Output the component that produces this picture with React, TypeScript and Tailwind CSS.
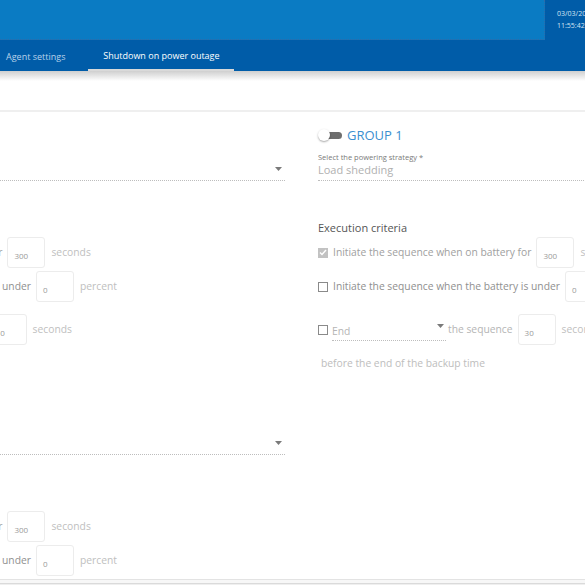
import React from "react";

const FONT = "font-['Open_Sans','Liberation_Sans',sans-serif]";

function Toggle() {
  return (
    <div className="relative w-[24px] h-[12px] flex items-center">
      <div className="ml-[6px] w-[18px] h-[7px] rounded-full bg-[#6e6e6e] bg-[radial-gradient(#9a9a9a_0.6px,transparent_0.7px)] bg-[length:2px_2px]" />
      <div className="absolute left-0 top-0 w-[12px] h-[12px] rounded-full bg-white shadow-[0_1px_2px_rgba(0,0,0,0.35)]" />
    </div>
  );
}

function Caret() {
  return (
    <svg width="7" height="4" viewBox="0 0 7 4" className="block">
      <polygon points="0,0 7,0 3.5,4" fill="#7a7a7a" />
    </svg>
  );
}

function Check({ checked }: { checked?: boolean }) {
  if (checked) {
    return (
      <div className="w-[10px] h-[10px] bg-[#c2c2c2] flex items-center justify-center shrink-0">
        <svg width="8" height="7" viewBox="0 0 8 7">
          <path d="M1 3.6 L3 5.5 L7 1" fill="none" stroke="#fff" strokeWidth="1.4" />
        </svg>
      </div>
    );
  }
  return <div className="w-[10px] h-[10px] border border-[#8a8a8a] bg-white shrink-0" />;
}

function NumBox({ value }: { value: string }) {
  return (
    <div className="w-[38px] h-[31px] border border-[#ececec] rounded-[3px] flex items-end pl-[6px] pb-[6px] text-[8px] leading-[10px] text-[#9a9a9a] shrink-0">
      {value}
    </div>
  );
}

function Group({ name, strategy }: { name: string; strategy: string }) {
  return (
    <div className="h-[274px] pt-[15px]">
      <div className="h-[16px] flex items-center gap-[5px]">
        <Toggle />
        <span className="text-[13px] leading-[16px] text-[#3b8fd0]">{name}</span>
      </div>
      <div className="mt-[9px] border-b border-dotted border-[#bdbdbd] pb-[2px] relative">
        <div className="text-[7.5px] leading-[10px] text-[#7a7a7a]">Select the powering strategy *</div>
        <div className="text-[11px] leading-[16px] text-[#b0b0b0]">{strategy}</div>
        <div className="absolute right-[3px] top-[15px]">
          <Caret />
        </div>
      </div>
      <div className="mt-[39px] text-[11px] leading-[16px] text-[#555]">Execution criteria</div>
      <div className="mt-[1px] h-[31px] flex items-center text-[10.3px] text-[#9a9a9a]">
        <Check checked />
        <span className="ml-[5px] mr-[5px] text-[#a0a0a0]">Initiate the sequence when on battery for</span>
        <NumBox value="300" />
        <span className="ml-[6px] text-[#c0c0c0]">seconds</span>
      </div>
      <div className="mt-[3px] h-[31px] flex items-center text-[10.3px]">
        <Check />
        <span className="ml-[5px] mr-[5px] text-[#8f8f8f]">Initiate the sequence when the battery is under</span>
        <NumBox value="0" />
        <span className="ml-[6px] text-[#c0c0c0]">percent</span>
      </div>
      <div className="mt-[12px] h-[31px] flex items-center text-[10.3px] text-[#b5b5b5]">
        <Check />
        <div className="ml-[4px] w-[114px] h-[31px] relative">
          <div className="absolute left-0 right-0 top-[8px] h-[19px] border-b border-dotted border-[#bdbdbd] leading-[18px]">End</div>
          <div className="absolute right-[2px] top-[10px]">
            <Caret />
          </div>
        </div>
        <span className="ml-[2px] mr-[5px]">the sequence</span>
        <NumBox value="30" />
        <span className="ml-[6px] text-[#c0c0c0]">seconds</span>
      </div>
      <div className="mt-[10px] ml-[3px] text-[10.3px] leading-[16px] text-[#bdbdbd]">before the end of the backup time</div>
    </div>
  );
}

export default function App() {
  return (
    <div className={`w-[585px] h-[585px] overflow-hidden bg-white flex flex-col ${FONT}`}>
      <header className="h-[40px] bg-[#005ca8] flex shrink-0">
        <div className="w-[545px] shrink-0 h-full bg-[#0a7bc3] border-r border-b border-dotted border-[#2f6aa8]" />
        <div className="pl-[12px] pt-[8px] text-[7px] leading-[12px] text-[#d4e3f2] whitespace-nowrap">
          <div>03/03/2020</div>
          <div>11:55:42</div>
        </div>
      </header>
      <nav className="h-[31px] bg-[#005ca8] flex shrink-0 text-[9px]">
        <div className="px-[6px] pt-[2px] flex items-center text-[#b9d2ea]">Agent settings</div>
        <div className="ml-[17px] w-[146px] flex items-center justify-center text-white border-b-2 border-[#d9d9d9] pt-[3px]">
          Shutdown on power outage
        </div>
      </nav>
      <div className="h-[10px] shrink-0 bg-gradient-to-b from-[#cfcfcf] to-white" />
      <div className="h-[29px] shrink-0" />
      <div className="h-[2px] shrink-0 bg-[#efefef]" />
      <div className="h-[467px] shrink-0 overflow-hidden">
        <div className="-ml-[211px] grid grid-cols-[496px_496px] gap-x-[33px] w-max">
          <Group name="GROUP 0" strategy="Load shedding" />
          <Group name="GROUP 1" strategy="Load shedding" />
          <Group name="GROUP 2" strategy="Load shedding" />
        </div>
      </div>
      <div className="flex-1 border-t border-[#e3e3e3] bg-[#f7f7f7] flex flex-col">
        <div className="h-[3px]" />
        <div className="flex-1 border-t border-[#dadada] bg-[#efefef]" />
      </div>
    </div>
  );
}
